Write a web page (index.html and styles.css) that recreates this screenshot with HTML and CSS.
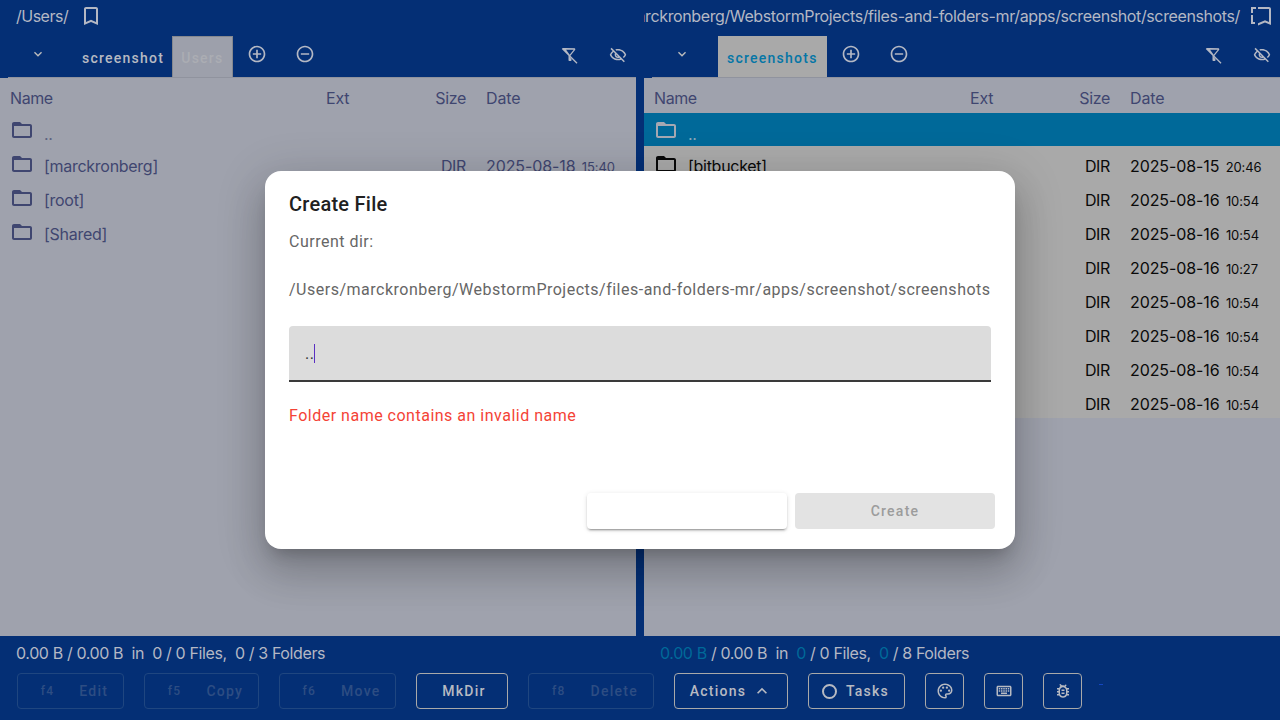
FILE: index.html
```html
<!DOCTYPE html>
<html lang="en">
<head>
    <meta charset="UTF-8">
    <title>Files and Folders</title>
    <link rel="stylesheet" href="styles.css">
</head>
<body>
    <svg class="icon-defs" width="0" height="0">
        <symbol id="i-folder" viewBox="0 0 24 24"><path d="M20 6h-8l-2-2H4c-1.100 0-2 .9-2 2v12c0 1.100.9 2 2 2h16c1.100 0 2-.9 2-2V8c0-1.100-.9-2-2-2zm0 12H4V8h16v10z"/></symbol>
        <symbol id="i-plus" viewBox="0 0 24 24"><path d="M13 7h-2v4H7v2h4v4h2v-4h4v-2h-4V7zm-1-5C6.480 2 2 6.480 2 12s4.480 10 10 10 10-4.480 10-10S17.520 2 12 2zm0 18c-4.410 0-8-3.590-8-8s3.590-8 8-8 8 3.590 8 8-3.590 8-8 8z"/></symbol>
        <symbol id="i-minus" viewBox="0 0 24 24"><path d="M7 11v2h10v-2H7zm5-9C6.480 2 2 6.480 2 12s4.480 10 10 10 10-4.480 10-10S17.520 2 12 2zm0 18c-4.410 0-8-3.590-8-8s3.590-8 8-8 8 3.590 8 8-3.590 8-8 8z"/></symbol>
        <symbol id="i-chevron" viewBox="0 0 24 24"><path d="M7.410 8.590 12 13.170l4.590-4.580L18 10l-6 6-6-6z"/></symbol>
        <symbol id="i-nofilter" viewBox="0 0 24 24"><path d="M4.250 5.660C4.350 5.790 9.990 13 9.990 13v6c0 .55.450 1 1.010 1h2.010c.55 0 1-.45 1-1v-1.180L4.250 5.660zM19.730 2.730 2.270 2.700 1 3.970l19.730 19.760L22 22.460 12.600 13l6.400-8V4c0-.55-.45-1-1-1H6.830zM16.950 5l-5.400 6.750L6.830 5h10.120z"/></symbol>
        <symbol id="i-hidden" viewBox="0 0 24 24"><path d="M12 6c3.790 0 7.170 2.130 8.820 5.500-.59 1.220-1.420 2.270-2.410 3.120l1.410 1.410c1.390-1.230 2.490-2.770 3.180-4.530C21.270 7.110 17 4 12 4c-1.270 0-2.490.2-3.640.57l1.650 1.650C10.660 6.090 11.320 6 12 6zM2.010 3.870l2.680 2.680C3.060 7.830 1.770 9.530 1 11.500 2.730 15.890 7 19 12 19c1.520 0 2.980-.29 4.320-.82l3.420 3.420 1.410-1.410L3.420 2.450 2.010 3.870zm7.500 7.500 2.610 2.610c-.04.010-.08.020-.12.020-1.380 0-2.500-1.120-2.500-2.500 0-.05.010-.08.010-.13zm-3.400-3.400 1.750 1.750c-.23.550-.36 1.150-.36 1.780 0 2.480 2.020 4.500 4.500 4.500.63 0 1.230-.13 1.770-.36l.98.980c-.88.240-1.800.38-2.750.38-3.790 0-7.170-2.130-8.820-5.500.7-1.430 1.720-2.610 2.930-3.530z"/></symbol>
        <symbol id="i-bookmark" viewBox="0 0 24 24"><path d="M17 3H7c-1.100 0-2 .9-2 2v16l7-3 7 3V5c0-1.100-.9-2-2-2zm0 15-5-2.180L7 18V5h10v13z"/></symbol>
        <symbol id="i-bookmarks" viewBox="0 0 24 24"><path d="M9 3h11c1.100 0 2 .9 2 2v16l-6-2.600-7 3v-2.200l7-3 4 1.800V5H9V3z"/><path d="M2 3h5v2H4v4H2V3zm0 8h2v7h2v2H2v-9z"/></symbol>
        <symbol id="i-palette" viewBox="0 0 24 24"><path d="M12 22C6.490 22 2 17.510 2 12S6.490 2 12 2s10 4.040 10 9c0 3.310-2.690 6-6 6h-1.770c-.28 0-.5.220-.5.500 0 .120.050.230.130.330.410.470.640 1.060.640 1.670A2.500 2.500 0 0 1 12 22zm0-18c-4.410 0-8 3.590-8 8s3.590 8 8 8c.280 0 .5-.22.500-.5a.540.540 0 0 0-.14-.35c-.41-.46-.63-1.050-.63-1.650a2.500 2.500 0 0 1 2.500-2.500H16c2.210 0 4-1.790 4-4 0-3.860-3.590-7-8-7z"/><circle cx="6.500" cy="11.500" r="1.500"/><circle cx="9.500" cy="7.500" r="1.500"/><circle cx="14.500" cy="7.500" r="1.500"/><circle cx="17.500" cy="11.500" r="1.500"/></symbol>
        <symbol id="i-keyboard" viewBox="0 0 24 24"><path d="M20 7v10H4V7h16m0-2H4c-1.100 0-1.990.9-1.990 2L2 17c0 1.100.9 2 2 2h16c1.100 0 2-.9 2-2V7c0-1.100-.9-2-2-2zm-9 3h2v2h-2zm0 3h2v2h-2zM8 8h2v2H8zm0 3h2v2H8zm-3 0h2v2H5zm0-3h2v2H5zm3 6h8v2H8zm6-3h2v2h-2zm0-3h2v2h-2zm3 3h2v2h-2zm0-3h2v2h-2z"/></symbol>
        <symbol id="i-bug" viewBox="0 0 24 24"><path d="M20 8h-2.810a5.985 5.985 0 0 0-1.820-1.960l1.040-1.040a1 1 0 0 0-1.410-1.410l-1.470 1.470C13.050 4.350 12.530 4.270 12 4.270s-1.050.08-1.530.2L9 3a1 1 0 0 0-1.410 1.410l1.030 1.040A6 6 0 0 0 6.810 8H4v2h2.090c-.05.330-.09.660-.09 1v1H4v2h2v1c0 .34.040.67.090 1H4v2h2.810c1.040 1.790 2.970 3 5.190 3s4.150-1.210 5.190-3H20v-2h-2.090c.05-.33.090-.66.090-1v-1h2v-2h-2v-1c0-.34-.04-.67-.09-1H20V8zm-4 7c0 2.210-1.790 4-4 4s-4-1.790-4-4v-4c0-2.210 1.790-4 4-4s4 1.790 4 4v4zm-6-1h4v2h-4zm0-4h4v2h-4z"/></symbol>
    </svg>

    <div class="app">
        <div class="panels">
            <section class="panel panel-left">
                <div class="path-bar">
                    <span class="path-text">/Users/</span>
                    <svg class="path-icon"><use href="#i-bookmark"/></svg>
                </div>
                <div class="tab-bar">
                    <svg class="tab-chevron"><use href="#i-chevron"/></svg>
                    <span class="tab">screenshot</span>
                    <span class="tab tab-active tab-dim">Users</span>
                    <svg class="tab-btn"><use href="#i-plus"/></svg>
                    <svg class="tab-btn"><use href="#i-minus"/></svg>
                    <span class="tab-spacer"></span>
                    <svg class="tab-tool"><use href="#i-nofilter"/></svg>
                    <svg class="tab-tool"><use href="#i-hidden"/></svg>
                </div>
                <div class="table">
                    <div class="row row-head"><span class="c-name">Name</span><span class="c-ext">Ext</span><span class="c-size">Size</span><span class="c-date">Date</span></div>
                    <div class="row row-up"><svg class="folder"><use href="#i-folder"/></svg><span class="c-file">..</span></div>
                    <div class="row"><svg class="folder"><use href="#i-folder"/></svg><span class="c-file">[marckronberg]</span><span class="c-size">DIR</span><span class="c-date">2025-08-18 <small>15:40</small></span></div>
                    <div class="row"><svg class="folder"><use href="#i-folder"/></svg><span class="c-file">[root]</span></div>
                    <div class="row"><svg class="folder"><use href="#i-folder"/></svg><span class="c-file">[Shared]</span></div>
                </div>
            </section>

            <section class="panel panel-right">
                <div class="path-bar path-bar-long">
                    <span class="path-text">/Users/marckronberg/WebstormProjects/files-and-folders-mr/apps/screenshot/screenshots/</span>
                    <svg class="path-icon"><use href="#i-bookmarks"/></svg>
                </div>
                <div class="tab-bar">
                    <svg class="tab-chevron"><use href="#i-chevron"/></svg>
                    <span class="tab tab-active tab-blue">screenshots</span>
                    <svg class="tab-btn"><use href="#i-plus"/></svg>
                    <svg class="tab-btn"><use href="#i-minus"/></svg>
                    <span class="tab-spacer"></span>
                    <svg class="tab-tool"><use href="#i-nofilter"/></svg>
                    <svg class="tab-tool"><use href="#i-hidden"/></svg>
                </div>
                <div class="table">
                    <div class="row row-head"><span class="c-name">Name</span><span class="c-ext">Ext</span><span class="c-size">Size</span><span class="c-date">Date</span></div>
                    <div class="row row-up row-selected"><svg class="folder"><use href="#i-folder"/></svg><span class="c-file">..</span></div>
                    <div class="list-body">
                        <div class="row"><svg class="folder"><use href="#i-folder"/></svg><span class="c-file">[bitbucket]</span><span class="c-size">DIR</span><span class="c-date">2025-08-15 <small>20:46</small></span></div>
                        <div class="row"><span class="c-size">DIR</span><span class="c-date">2025-08-16 <small>10:54</small></span></div>
                        <div class="row"><span class="c-size">DIR</span><span class="c-date">2025-08-16 <small>10:54</small></span></div>
                        <div class="row"><span class="c-size">DIR</span><span class="c-date">2025-08-16 <small>10:27</small></span></div>
                        <div class="row"><span class="c-size">DIR</span><span class="c-date">2025-08-16 <small>10:54</small></span></div>
                        <div class="row"><span class="c-size">DIR</span><span class="c-date">2025-08-16 <small>10:54</small></span></div>
                        <div class="row"><span class="c-size">DIR</span><span class="c-date">2025-08-16 <small>10:54</small></span></div>
                        <div class="row"><span class="c-size">DIR</span><span class="c-date">2025-08-16 <small>10:54</small></span></div>
                    </div>
                </div>
            </section>
        </div>

        <footer class="footer">
            <div class="summary-row">
                <div class="summary">0.00 B / 0.00 B &nbsp;in &nbsp;0 / 0 Files, &nbsp;0 / 3 Folders</div>
                <div class="summary"><b>0.00 B</b> / 0.00 B &nbsp;in &nbsp;<b>0</b> / 0 Files, &nbsp;<b>0</b> / 8 Folders</div>
            </div>
            <div class="button-row">
                <span class="btn btn-off btn-edit"><i>f4</i>Edit</span>
                <span class="btn btn-off btn-copy"><i>f5</i>Copy</span>
                <span class="btn btn-off btn-move"><i>f6</i>Move</span>
                <span class="btn btn-mkdir">MkDir</span>
                <span class="btn btn-off btn-delete"><i>f8</i>Delete</span>
                <span class="btn btn-actions">Actions<svg class="btn-chevron"><use href="#i-chevron"/></svg></span>
                <span class="btn btn-tasks"><span class="ring"></span>Tasks</span>
                <span class="btn btn-icon"><svg><use href="#i-palette"/></svg></span>
                <span class="btn btn-icon"><svg><use href="#i-keyboard"/></svg></span>
                <span class="btn btn-icon"><svg><use href="#i-bug"/></svg></span>
                <span class="tiny-dash"></span>
            </div>
        </footer>
    </div>

    <div class="overlay">
        <div class="dialog">
            <h2 class="dialog-title">Create File</h2>
            <p class="dialog-label">Current dir:</p>
            <p class="dialog-path">/Users/marckronberg/WebstormProjects/files-and-folders-mr/apps/screenshot/screenshots</p>
            <div class="field"><span class="field-value">..</span><span class="caret"></span></div>
            <p class="field-error">Folder name contains an invalid name</p>
            <div class="dialog-actions">
                <span class="dlg-btn dlg-blank"></span>
                <span class="dlg-btn dlg-create">Create</span>
            </div>
        </div>
    </div>
</body>
</html>
```

FILE: styles.css
```css
* {
    box-sizing: border-box;
}
html, body {
    margin: 0;
    height: 100%;
    overflow: hidden;
}
body {
    font-family: Roboto, "Liberation Sans", sans-serif;
    background: #042f75;
    color: #bdbdbd;
}
.icon-defs {
    position: absolute;
}
svg {
    fill: currentColor;
}
.app {
    display: flex;
    flex-direction: column;
    height: 720px;
}
.panels {
    display: flex;
    height: 636px;
    gap: 8px;
}
.panel {
    width: 636px;
    display: flex;
    flex-direction: column;
    min-width: 0;
}
.path-bar {
    display: flex;
    align-items: center;
    height: 36px;
    padding: 0 0 4px 16px;
    font-family: Inter, sans-serif;
    font-size: 16px;
    letter-spacing: -.5px;
    white-space: nowrap;
    color: #b4b8c4;
}
.path-icon {
    width: 24px;
    height: 24px;
    margin-left: 11px;
    flex: none;
}
.path-bar-long {
    justify-content: flex-end;
    padding: 0 7px 4px 0;
    letter-spacing: -.38px;
    overflow: hidden;
}
.path-bar-long .path-icon {
    margin-left: 9px;
}
.tab-bar {
    display: flex;
    align-items: flex-start;
    height: 42px;
}
.tab-chevron {
    width: 16px;
    height: 16px;
    margin: 10px 0 0 30px;
    color: #bdbdbd;
}
.tab {
    height: 41px;
    padding: 14px 8px 0 9px;
    margin-left: 27px;
    font-size: 14px;
    line-height: 16px;
    font-weight: 500;
    letter-spacing: 1.250px;
    color: #b7bac2;
}
.tab-active {
    background: #a9a9a9;
    margin-left: 0;
}
.tab-dim {
    color: #abadb3;
    background: #9da0ab;
    border: 1px solid #85888f;
    border-bottom: 0;
    padding: 13px 8px 0;
}
.tab-blue {
    color: #0576a6;
    margin-left: 28px;
    padding-right: 9px;
}
.tab-btn {
    width: 20px;
    height: 20px;
    margin: 8px 0 0 14px;
    color: #b4b8c4;
}
.tab-btn + .tab-btn {
    margin-left: 28px;
}
.tab-spacer {
    flex: 1;
}
.tab-tool {
    width: 18px;
    height: 18px;
    margin: 10px 9px 0 0;
    color: #b4b8c4;
}
.tab-tool + .tab-tool {
    margin-left: 21px;
}
.table {
    flex: 1;
    background: #9fa2ad;
    color: #3f4670;
    font-family: Inter, sans-serif;
    font-size: 16px;
    position: relative;
}
.table::before {
    content: "";
    position: absolute;
    top: -1px;
    left: 8px;
    right: 0;
    height: 1px;
    background: #90939e;
}
.row {
    display: flex;
    align-items: center;
    height: 34px;
    position: relative;
    padding-left: 10px;
}
.row-head {
    height: 35px;
}
.c-name {
    padding-top: 5px;
    letter-spacing: -.4px;
}
.row-up {
    height: 33px;
}
.row .c-ext, .row .c-size, .row .c-date {
    position: absolute;
    top: 10px;
}
.c-ext {
    left: 326px;
    letter-spacing: -.2px;
}
.c-size {
    left: 0;
    width: 466px;
    text-align: right;
    letter-spacing: -.35px;
}
.c-date {
    left: 486px;
    letter-spacing: -.1px;
    white-space: nowrap;
}
.c-date small {
    font-size: 13px;
    margin-left: 2px;
}
.folder {
    width: 24px;
    height: 24px;
    margin-top: 2px;
    color: #3f4670;
    flex: none;
}
.row-up .folder {
    margin-top: 0;
}
.c-file {
    margin-left: 10px;
    padding-top: 6px;
    letter-spacing: -.28px;
}
.row-up .c-file {
    padding-top: 8px;
    color: #5d6380;
}
.row-selected {
    background: #006999;
}
.row-selected .folder {
    color: #a5a8b2;
}
.row-selected .c-file {
    color: #8fa9ba;
}
.list-body {
    background: #a9a9a9;
    color: #0a0a0a;
    height: 272px;
}
.list-body .folder {
    color: #0a0a0a;
}
.footer {
    flex: 1;
    min-height: 0;
    padding-top: 8px;
}
.summary-row {
    display: flex;
    height: 20px;
    font-family: Inter, sans-serif;
    font-size: 16px;
    letter-spacing: -.38px;
    line-height: 19px;
    color: #b4b8c4;
}
.summary {
    flex: none;
    width: 644px;
    padding-left: 16px;
    white-space: nowrap;
}
.summary + .summary {
    width: 636px;
}
.summary b {
    font-weight: 400;
    color: #006999;
}
.button-row {
    display: flex;
    align-items: flex-start;
    margin-top: 9px;
    padding-left: 17px;
}
.btn {
    display: flex;
    align-items: center;
    justify-content: center;
    height: 36px;
    border: 1px solid #a9a9a9;
    border-radius: 4px;
    font-size: 14px;
    font-weight: 500;
    letter-spacing: 1.250px;
    color: #b7bac2;
    white-space: nowrap;
    flex: none;
}
.btn i {
    font-style: normal;
    font-size: 12px;
    margin-right: 25px;
}
.btn-off {
    border-color: #1f4680;
    color: #2d4d83;
    padding-left: 8px;
}
.btn-edit {
    width: 107px;
    margin-right: 20px;
}
.btn-copy {
    width: 115px;
    margin-right: 20px;
}
.btn-move {
    width: 117px;
    margin-right: 20px;
}
.btn-mkdir {
    width: 92px;
    padding-left: 4px;
    margin-right: 20px;
}
.btn-delete {
    width: 126px;
    margin-right: 20px;
}
.btn-actions {
    width: 114px;
    margin-right: 20px;
}
.btn-chevron {
    width: 20px;
    height: 20px;
    margin-left: 6px;
    transform: rotate(180deg);
}
.btn-tasks {
    width: 97px;
    padding-right: 2px;
    margin-right: 20px;
}
.ring {
    width: 15px;
    height: 15px;
    border: 2px solid #b7bac2;
    border-radius: 50%;
    margin-right: 9px;
}
.btn-icon {
    width: 39px;
    margin-right: 20px;
}
.btn-icon svg {
    width: 18px;
    height: 18px;
}
.tiny-dash {
    width: 4px;
    height: 1px;
    margin-top: 11px;
    margin-left: -3px;
    background: #1546c0;
}
.overlay {
    position: absolute;
    inset: 0;
    display: flex;
    align-items: flex-start;
    justify-content: center;
    padding-top: 171px;
}
.dialog {
    width: 750px;
    height: 378px;
    background: #fff;
    border-radius: 16px;
    padding: 21px 24px 20px;
    box-shadow: 0 11px 15px -7px rgba(0,0,0,.2), 0 24px 38px 3px rgba(0,0,0,.14), 0 9px 46px 8px rgba(0,0,0,.12);
    display: flex;
    flex-direction: column;
}
.dialog-title {
    margin: 0;
    font-size: 20px;
    line-height: 24px;
    font-weight: 500;
    letter-spacing: .25px;
    color: #212121;
}
.dialog-label, .dialog-path {
    margin: 0;
    font-size: 16px;
    line-height: 20px;
    letter-spacing: .5px;
    color: #666;
    white-space: nowrap;
}
.dialog-label {
    margin-top: 16px;
}
.dialog-path {
    margin-top: 28px;
}
.field {
    display: flex;
    align-items: center;
    height: 56px;
    margin-top: 26px;
    padding: 0 0 0 16px;
    background: #dcdcdc;
    border-radius: 4px 4px 0 0;
    border-bottom: 2px solid #3a3a3a;
    width: 702px;
}
.field-value {
    font-size: 16px;
    color: #333;
    letter-spacing: .5px;
}
.caret {
    width: 1px;
    height: 19px;
    background: #5a2fc2;
}
.field-error {
    margin: 24px 0 0;
    font-size: 16px;
    line-height: 20px;
    letter-spacing: .5px;
    color: #f44336;
}
.dialog-actions {
    margin-top: auto;
    margin-right: -4px;
    display: flex;
    justify-content: flex-end;
    gap: 8px;
}
.dlg-btn {
    display: flex;
    align-items: center;
    justify-content: center;
    width: 200px;
    height: 36px;
    border-radius: 4px;
    font-size: 14px;
    font-weight: 500;
    letter-spacing: 1.250px;
}
.dlg-blank {
    background: #fff;
    box-shadow: 0 3px 1px -2px rgba(0,0,0,.2), 0 2px 2px 0 rgba(0,0,0,.14), 0 1px 5px 0 rgba(0,0,0,.12);
}
.dlg-create {
    background: #e3e3e3;
    color: #9c9c9c;
}
```
